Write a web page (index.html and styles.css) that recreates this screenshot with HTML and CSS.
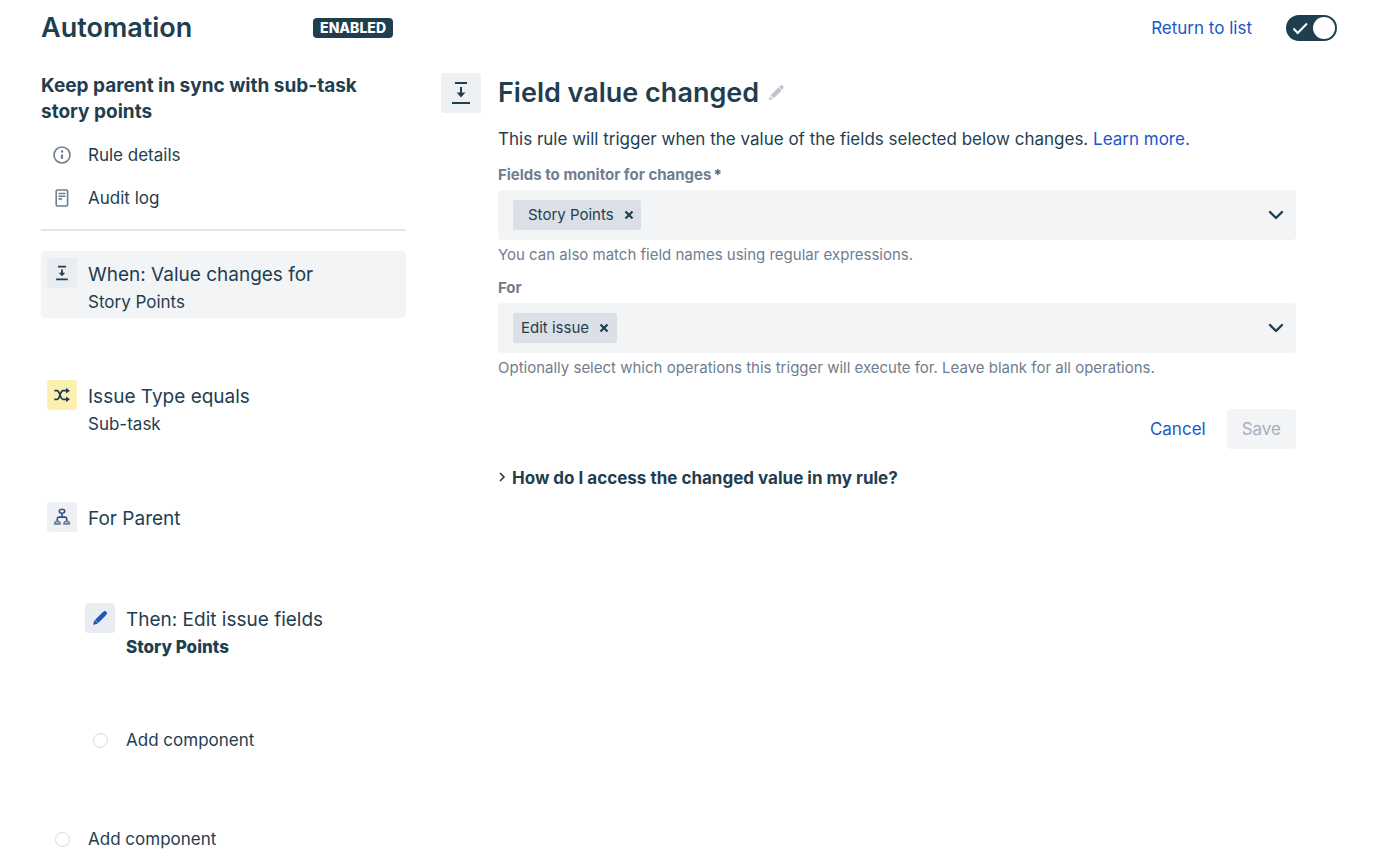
FILE: index.html
```html
<!DOCTYPE html>
<html lang="en">
<head>
<meta charset="utf-8">
<title>Automation</title>
<meta name="viewport" content="width=device-width, initial-scale=1">
<link rel="stylesheet" href="styles.css">
</head>
<body>
<header class="topbar">
  <div class="topbar-title">
    <h1 class="page-title">Automation</h1>
    <span class="badge">ENABLED</span>
  </div>
  <div class="topbar-actions">
    <a class="link" href="#">Return to list</a>
    <label class="toggle">
      <input type="checkbox" class="toggle-input" aria-label="Rule enabled" checked>
      <svg class="toggle-check" viewBox="0 0 16 16" aria-hidden="true"><path d="M1.5 8.5l4.2 4.5L15 3.5"/></svg>
      <span class="toggle-knob"></span>
    </label>
  </div>
</header>
<div class="layout">
  <aside class="sidebar">
    <h2 class="rule-name">Keep parent in sync with sub-task story points</h2>
    <nav class="rule-nav">
      <a class="nav-item" href="#">
        <svg class="nav-icon" viewBox="0 0 18 18" aria-hidden="true"><circle cx="9" cy="9" r="8" class="stroke"/><circle cx="9" cy="5.5" r="1.2" class="fill"/><path d="M9 8.6v4.2" class="stroke thick"/></svg>
        Rule details
      </a>
      <a class="nav-item" href="#">
        <svg class="nav-icon" viewBox="0 0 18 18" aria-hidden="true"><rect x="3.2" y="1" width="11.4" height="16" rx="1" class="stroke"/><path d="M5.5 4.5h7M5.5 7.2h7M5.5 9.9h3.5" class="stroke"/></svg>
        Audit log
      </a>
    </nav>
    <ol class="steps">
      <li class="step step-selected">
        <span class="tile"><svg class="tile-icon" viewBox="0 0 20 20" aria-hidden="true"><path class="line" d="M5.5 3h9M3.5 17h13M10 6v6"/><path class="solid" d="M6.4 9.7h7.2L10 13.7z"/></svg></span>
        <div><div class="step-title">When: Value changes for</div><div class="step-sub">Story Points</div></div>
      </li>
      <li class="step">
        <span class="tile tile-yellow"><svg class="tile-icon" viewBox="0 0 20 20" aria-hidden="true"><path class="line" d="M1.5 5.2h3c3.4 0 3 9.6 6.8 9.6h4M1.5 14.8h3c3.4 0 3-9.6 6.8-9.6h4"/><path class="solid" d="M14.5 2l4.3 3.2-4.3 3.2zM14.5 11.6l4.3 3.2-4.3 3.2z"/></svg></span>
        <div><div class="step-title">Issue Type equals</div><div class="step-sub">Sub-task</div></div>
      </li>
      <li class="step">
        <span class="tile tile-light"><svg class="tile-icon" viewBox="0 0 20 20" aria-hidden="true"><ellipse class="line thin" cx="10" cy="3.6" rx="3" ry="2.2"/><path class="line thin" d="M10 6v4M4.8 14.5v-2.6c0-1 .7-1.8 1.8-1.8h6.8c1.1 0 1.8.8 1.8 1.8v2.6"/><path class="line thin grey" d="M1.8 17.6c0-1.8 1.2-2.8 3-2.8s3 1 3 2.8zM12.2 17.6c0-1.8 1.2-2.8 3-2.8s3 1 3 2.8z"/></svg></span>
        <div class="step-title">For Parent</div>
      </li>
      <li class="step step-nested">
        <span class="tile"><svg class="tile-icon" viewBox="0 0 20 20" aria-hidden="true"><path class="pen" d="M3 17l1.2-4 2.8 2.8zM5 12.1l7.5-7.4 2.9 2.9L8 15.1zM13 4.3l1.2-1.2c1.6-1.4 4.1 1 2.8 2.6l-1.2 1.4z"/></svg></span>
        <div><div class="step-title">Then: Edit issue fields</div><div class="step-sub step-sub-strong">Story Points</div></div>
      </li>
      <li class="step-nested"><button type="button" class="add"><span class="add-dot"></span>Add component</button></li>
      <li><button type="button" class="add"><span class="add-dot"></span>Add component</button></li>
    </ol>
  </aside>
  <main class="main">
    <span class="tile tile-large"><svg class="tile-icon-large" viewBox="0 0 20 24" aria-hidden="true"><path class="line" d="M4 2h12M1 22h18M10 6v8"/><path class="solid" d="M5.6 11.4h8.8L10 16.6z"/></svg></span>
    <div class="panel">
      <div class="panel-head">
        <h2 class="panel-title">Field value changed</h2>
        <button type="button" class="icon-btn" aria-label="Rename">
          <svg class="rename-icon" viewBox="0 0 20 20" aria-hidden="true"><path d="M2 18l1.3-4.4 3.2 3.1zM4 12.4l8.9-8.7 3.4 3.4-8.8 8.8zM13.5 3.1l1.2-1.1c1.9-1.6 4.9 1.2 3.3 3.1l-1.2 1.3z"/></svg>
        </button>
      </div>
      <p class="intro">This rule will trigger when the value of the fields selected below changes. <a class="link" href="#">Learn more.</a></p>
      <form class="form">
        <label class="field-label" for="fields">Fields to monitor for changes<span class="required">*</span></label>
        <div class="select">
          <span class="chip chip-wide">Story Points
            <button type="button" class="chip-x" aria-label="Remove Story Points"><svg viewBox="0 0 10 10" class="x-icon" aria-hidden="true"><path d="M1.5 1.5l7 7M8.5 1.5l-7 7"/></svg></button>
          </span>
          <input id="fields" class="select-input" type="text" role="combobox" aria-expanded="false">
          <button type="button" class="icon-btn" aria-label="Open fields"><svg class="chevron" viewBox="0 0 16 16" aria-hidden="true"><path d="M2 5l6 6 6-6"/></svg></button>
        </div>
        <p class="hint">You can also match field names using regular expressions.</p>
        <label class="field-label" for="operations">For</label>
        <div class="select">
          <span class="chip">Edit issue
            <button type="button" class="chip-x" aria-label="Remove Edit issue"><svg viewBox="0 0 10 10" class="x-icon" aria-hidden="true"><path d="M1.5 1.5l7 7M8.5 1.5l-7 7"/></svg></button>
          </span>
          <input id="operations" class="select-input" type="text" role="combobox" aria-expanded="false">
          <button type="button" class="icon-btn" aria-label="Open operations"><svg class="chevron" viewBox="0 0 16 16" aria-hidden="true"><path d="M2 5l6 6 6-6"/></svg></button>
        </div>
        <p class="hint">Optionally select which operations this trigger will execute for. Leave blank for all operations.</p>
        <div class="actions">
          <button type="button" class="btn btn-link">Cancel</button>
          <button type="submit" class="btn btn-save" disabled>Save</button>
        </div>
      </form>
      <details class="help">
        <summary class="help-title"><svg class="help-arrow" viewBox="0 0 8 12" aria-hidden="true"><path d="M2 1l4 4-4 4"/></svg>How do I access the changed value in my rule?</summary>
      </details>
    </div>
  </main>
</div>
</body>
</html>
```
FILE: styles.css
```css
:root {
  --ink: #1f3e50;
  --muted: #6f7d90;
  --blue: #1b57c9;
  --surface: #f3f4f6;
  --tile: #e9edf1;
  --chip: #dae0e6;
}
* { box-sizing: border-box; }
body {
  margin: 0;
  background: #fff;
  color: var(--ink);
  font-family: Inter, "Liberation Sans", sans-serif;
  font-size: 17px;
  line-height: 24px;
}
h1, h2, p, ol { margin: 0; padding: 0; }
ol { list-style: none; }
button, input { font: inherit; color: inherit; }
button { border: 0; background: none; padding: 0; cursor: pointer; }
svg { display: block; fill: none; }
.link { color: var(--blue); text-decoration: none; }

.topbar {
  display: flex;
  justify-content: space-between;
  align-items: center;
  height: 56px;
  padding: 0 42px 0 41px;
}
.topbar-title { display: flex; width: 352px; justify-content: space-between; align-items: center; }
.page-title { font-size: 27px; line-height: 36px; font-weight: 600; }
.badge {
  border-radius: 4px;
  background: var(--ink);
  color: #fff;
  font-size: 14px;
  line-height: 20px;
  font-weight: 800;
  padding: 0 7px;
}
.topbar-actions { display: flex; align-items: center; gap: 34px; }
.toggle {
  display: flex;
  align-items: center;
  justify-content: space-between;
  width: 51px;
  height: 26px;
  padding: 0 2px 0 6px;
  border-radius: 13px;
  background: var(--ink);
  cursor: pointer;
}
.toggle-input { position: absolute; opacity: 0; margin: 0; }
.toggle-check { width: 16px; height: 16px; stroke: #fff; stroke-width: 2; }
.toggle-knob { width: 22px; height: 22px; border-radius: 50%; background: #fff; }

.layout {
  display: grid;
  grid-template-columns: 365px 1fr;
  gap: 35px;
  padding: 17px 83px 0 41px;
}
.rule-name { padding-right: 40px; font-size: 19px; line-height: 26px; font-weight: 700; }
.rule-nav {
  display: flex;
  flex-direction: column;
  gap: 19px;
  padding: 18px 0 19px 12px;
  margin-bottom: 20px;
  border-bottom: 2px solid #e2e6ea;
}
.nav-item { display: flex; align-items: center; gap: 17px; color: inherit; text-decoration: none; }
.nav-icon { width: 18px; height: 18px; }
.stroke { stroke: var(--muted); stroke-width: 1.6; }
.thick { stroke-width: 2.2; }
.fill { fill: var(--muted); }

.steps { display: flex; flex-direction: column; gap: 55px; }
.step {
  display: flex;
  gap: 11px;
  min-height: 46px;
  padding: 7px 6px 4px;
  border-radius: 4px;
}
.step-selected { background: var(--surface); }
.step-nested { margin-left: 38px; }
.step-title { font-size: 19px; line-height: 34px; }
.step-sub { line-height: 20px; margin-bottom: 2px; }
.step-sub-strong { font-weight: 800; }
.tile {
  display: grid;
  place-items: center;
  flex: none;
  width: 30px;
  height: 30px;
  border-radius: 3px;
  background: var(--tile);
}
.tile-yellow { background: #fdefb2; }
.tile-light { background: #eef0f3; }
.tile-large { width: 40px; height: 40px; background: #eef1f3; }
.tile-icon { width: 18px; height: 18px; }
.tile-icon-large { width: 20px; height: 24px; }
.line { stroke: var(--ink); stroke-width: 2; }
.thin { stroke: #2b4f86; stroke-width: 1.8; }
.grey { stroke: #6b7f9c; }
.solid { fill: var(--ink); }
.pen { fill: var(--blue); stroke: #1f4692; stroke-width: 1; }
.add { display: flex; align-items: center; gap: 18px; height: 44px; padding-left: 14px; }
.add-dot { width: 15px; height: 15px; border: 1px solid #d6dbe1; border-radius: 50%; }

.main { display: flex; align-items: flex-start; gap: 17px; }
.panel { flex: 1; min-width: 0; }
.panel-head { display: flex; align-items: center; gap: 8px; }
.panel-title { font-size: 27px; line-height: 40px; font-weight: 600; }
.rename-icon { width: 18px; height: 18px; fill: #bcc4ce; }
.intro { margin-top: 14px; }
.field-label {
  display: block;
  color: var(--muted);
  font-size: 15px;
  line-height: 20px;
  font-weight: 700;
  margin: 14px 0 5px;
}
.required { margin-left: 2px; color: #5c6670; }
.select {
  display: flex;
  align-items: center;
  height: 50px;
  padding: 0 12px 0 15px;
  border-radius: 4px;
  background: var(--surface);
}
.select-input { flex: 1; min-width: 0; border: 0; outline: 0; background: none; }
.chip {
  display: flex;
  align-items: center;
  gap: 10px;
  height: 30px;
  padding: 0 8px;
  border-radius: 2px;
  background: var(--chip);
  font-size: 15px;
  line-height: 20px;
}
.chip-wide { padding: 0 7px 0 15px; }
.x-icon { width: 10px; height: 10px; stroke: var(--ink); stroke-width: 2.2; }
.chevron { width: 16px; height: 16px; stroke: var(--ink); stroke-width: 2.4; stroke-linecap: round; stroke-linejoin: round; }
.hint { margin-top: 6px; color: var(--muted); font-size: 15px; line-height: 18px; }
.actions { display: flex; justify-content: flex-end; gap: 6px; margin-top: 32px; }
.btn { height: 40px; padding: 0 15px; border-radius: 4px; }
.btn-link { color: var(--blue); }
.btn-save { background: var(--surface); color: #a6afbb; cursor: default; }
.help { margin-top: 17px; }
.help-title { display: flex; align-items: center; gap: 6px; list-style: none; font-weight: 700; cursor: pointer; }
.help-arrow { width: 8px; height: 12px; stroke: var(--ink); stroke-width: 1.6; }
```
